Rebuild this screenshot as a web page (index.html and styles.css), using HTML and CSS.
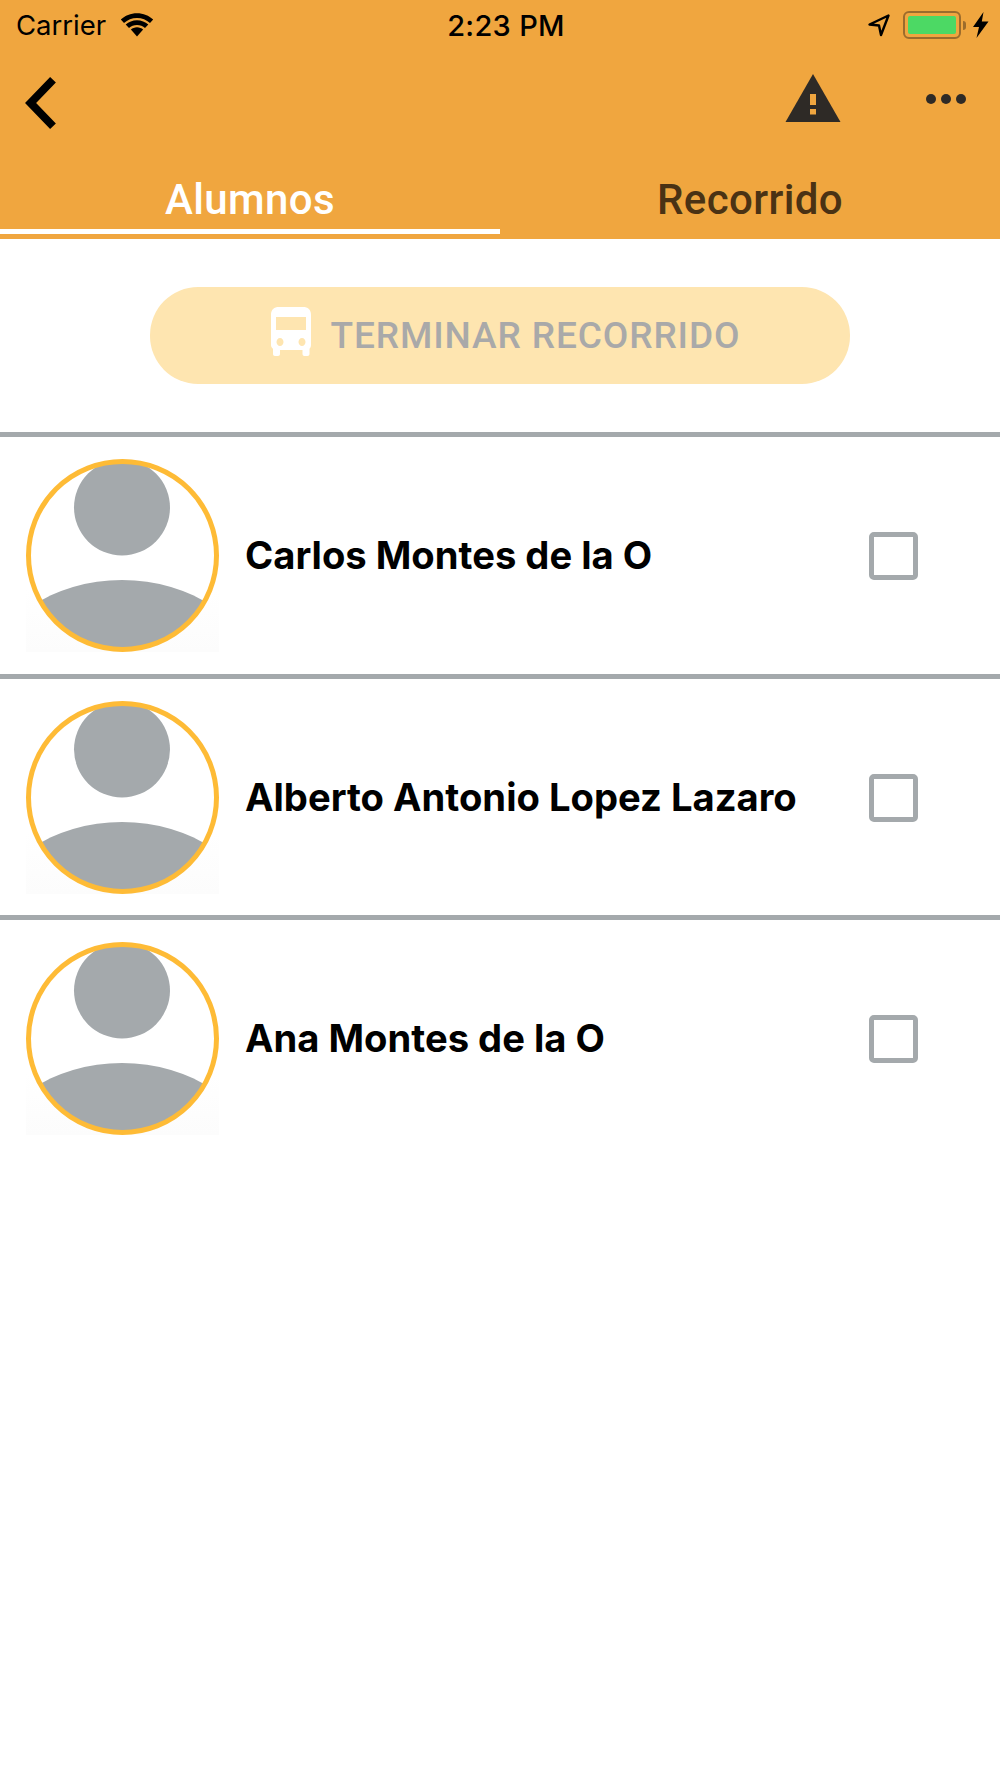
FILE: index.html
```html
<!DOCTYPE html>
<html lang="en">
<head>
  <meta charset="UTF-8">
  <title>Alumnos</title>
  <link rel="stylesheet" href="styles.css">
</head>
<body>
  <header class="app-header">
    <div class="status-bar">
      <div class="status-left">
        <span class="carrier">Carrier</span>
        <svg class="wifi-icon" viewBox="0 0 34 24"><path d="M17 5c5 0 9.500 1.900 13 5l3.200-3.400C29 2.600 23.300.2 17 .2S5 2.600.8 6.600L4 10c3.500-3.100 8-5 13-5z"/><path d="M17 12c3.100 0 5.900 1.100 8 3l3.300-3.400C25.300 8.900 21.300 7.200 17 7.200S8.700 8.900 5.700 11.600L9 15c2.100-1.900 4.900-3 8-3z"/><path d="M17 14.300c-2.400 0-4.500.9-6.100 2.300L17 23.500l6.100-6.900c-1.600-1.400-3.700-2.300-6.100-2.300z"/></svg>
      </div>
      <span class="clock">2:23 PM</span>
      <div class="status-right">
        <svg class="location-icon" viewBox="0 0 24 24"><path d="M21.500 2.500 2.500 11.500l9.500 1 2 9.500z" fill="none" stroke="#000" stroke-width="2.400" stroke-linejoin="round"/></svg>
        <div class="battery"><div class="battery-fill"></div></div>
        <div class="battery-tip"></div>
        <svg class="bolt-icon" viewBox="0 0 16 26"><path d="M10.500 0 0 15h6l-2.500 11L15.500 9.500H8.800z"/></svg>
      </div>
    </div>
    <div class="nav-bar">
      <svg class="back-icon" viewBox="0 0 34 54"><path d="M28 3.800 5.600 27 28 50.200" fill="none" stroke="#000" stroke-width="8"/></svg>
      <div class="nav-actions">
        <svg class="alert-icon" viewBox="0 0 56 48"><path d="M28 0 55.500 48H.500z" fill="#2e2a26"/><path d="M25 20h6v11h-6zM25 35h6v5.500h-6z" fill="#f0a63f"/></svg>
        <div class="more-icon"><span></span><span></span><span></span></div>
      </div>
    </div>
    <nav class="tabs">
      <div class="tab tab-active">Alumnos</div>
      <div class="tab">Recorrido</div>
    </nav>
  </header>

  <div class="finish-section">
    <div class="finish-btn">
      <svg class="bus-icon" viewBox="0 0 40 49"><path fill-rule="evenodd" d="M8 0h24c5 0 8 2.500 8 8v30c0 1.500-.5 2.800-1.500 3.800V47c0 1.200-.8 2-2 2h-3c-1.200 0-2-.8-2-2v-4H9v4c0 1.200-.8 2-2 2H4c-1.200 0-2-.8-2-2v-5.200C.6 40.800 0 39.500 0 38V8C0 2.500 3 0 8 0zM5 10v13h30V10zM9 31c-2 0-3.500 1.700-3.500 4s1.500 4 3.500 4 3.500-1.700 3.500-4-1.500-4-3.500-4zm22 0c-2 0-3.500 1.700-3.500 4s1.500 4 3.500 4 3.500-1.700 3.500-4-1.500-4-3.500-4z"/></svg>
      <span>TERMINAR RECORRIDO</span>
    </div>
  </div>

  <ul class="student-list">
    <li class="student-row">
      <svg class="avatar" viewBox="0 0 193 193"><use href="#avatar-art"/></svg>
      <span class="student-name">Carlos Montes de la O</span>
      <div class="checkbox"></div>
    </li>
    <li class="student-row">
      <svg class="avatar" viewBox="0 0 193 193"><use href="#avatar-art"/></svg>
      <span class="student-name">Alberto Antonio Lopez Lazaro</span>
      <div class="checkbox"></div>
    </li>
    <li class="student-row">
      <svg class="avatar" viewBox="0 0 193 193"><use href="#avatar-art"/></svg>
      <span class="student-name">Ana Montes de la O</span>
      <div class="checkbox"></div>
    </li>
  </ul>

  <svg class="svg-defs" width="0" height="0">
    <defs>
      <clipPath id="avatar-clip"><circle cx="96.500" cy="96.500" r="94"/></clipPath>
      <filter id="avatar-soft"><feGaussianBlur stdDeviation="0.7"/></filter>
      <linearGradient id="avatar-fade" x1="0" y1="0" x2="0" y2="1">
        <stop offset="0" stop-color="#fff"/>
        <stop offset="1" stop-color="#fcfcfc"/>
      </linearGradient>
      <g id="avatar-art">
        <rect y="130" width="193" height="63" fill="url(#avatar-fade)"/>
        <circle cx="96.500" cy="96.500" r="94" fill="#fff"/>
        <g clip-path="url(#avatar-clip)">
          <g filter="url(#avatar-soft)">
            <circle cx="96" cy="48.500" r="48" fill="#a4a9ac"/>
            <ellipse cx="96" cy="212" rx="128" ry="91" fill="#a4a9ac"/>
          </g>
        </g>
        <circle cx="96.500" cy="96.500" r="94" fill="none" stroke="#febb36" stroke-width="5"/>
      </g>
    </defs>
  </svg>
</body>
</html>
```

FILE: styles.css
```css
/* Reset some default styles */
* {
  box-sizing: border-box;
  margin: 0;
  padding: 0;
}

body {
  font-family: Inter, "Liberation Sans", sans-serif;
  background-color: #fff;
  width: 1000px;
}

/* Orange header */
.app-header {
  height: 239px;
  background-color: #f0a63f;
  display: flex;
  flex-direction: column;
}

.status-bar {
  height: 50px;
  padding: 0 11px 0 16px;
  display: flex;
  align-items: center;
  justify-content: space-between;
  color: #000;
}

.status-left,
.status-right {
  width: 300px;
  display: flex;
  align-items: center;
}

.status-right {
  justify-content: flex-end;
}

.carrier {
  font-size: 27.500px;
}

.wifi-icon {
  width: 34px;
  height: 24px;
  margin-left: 14px;
}

.clock {
  margin-left: 7px;
  font-size: 29px;
  font-weight: 500;
  letter-spacing: 0.300px;
}

.location-icon {
  width: 24px;
  height: 24px;
  margin-right: 12px;
}

.battery {
  width: 58px;
  height: 28px;
  border: 2px solid #9c6c2c;
  border-radius: 6px;
  padding: 3px;
}

.battery-fill {
  height: 100%;
  background-color: #4cd964;
  border-radius: 2px;
}

.battery-tip {
  width: 3px;
  height: 9px;
  margin: 0 7px 0 2px;
  background-color: #9c6c2c;
  border-radius: 0 3px 3px 0;
}

.bolt-icon {
  width: 16px;
  height: 26px;
}

.nav-bar {
  flex: 1;
  padding: 0 34px 20px 25px;
  display: flex;
  align-items: center;
  justify-content: space-between;
}

.back-icon {
  width: 34px;
  height: 54px;
}

.nav-actions {
  display: flex;
  align-items: center;
}

.alert-icon {
  width: 56px;
  height: 48px;
  margin: -9px 85px 0 0;
}

.more-icon {
  display: flex;
  gap: 5px;
  margin-top: -8px;
}

.more-icon span {
  width: 10px;
  height: 10px;
  border-radius: 50%;
  background-color: #2e2a26;
}

/* Tabs */
.tabs {
  display: flex;
  height: 64px;
}

.tab {
  width: 500px;
  height: 59px;
  text-align: center;
  font-family: Roboto, sans-serif;
  font-size: 42px;
  font-weight: 500;
  letter-spacing: 0.400px;
  line-height: 50px;
  color: #4a3214;
}

.tab-active {
  color: #fff;
  border-bottom: 5px solid #fff;
}

/* Finish button */
.finish-section {
  height: 193px;
  padding-top: 48px;
  display: flex;
  justify-content: center;
}

.finish-btn {
  width: 700px;
  height: 97px;
  padding-left: 11px;
  background-color: #fee5b0;
  border-radius: 48px;
  display: flex;
  align-items: center;
  justify-content: center;
  gap: 20px;
  font-family: Roboto, sans-serif;
  font-size: 37px;
  font-weight: 500;
  letter-spacing: 0.900px;
  color: #a9a9a9;
}

.bus-icon {
  width: 40px;
  height: 49px;
  margin-top: -8px;
  fill: #fff;
}

/* Student rows */
.student-list {
  list-style: none;
}

.student-row {
  height: 241.500px;
  padding: 22px 82px 0 26px;
  border-top: 5px solid #a4a9ac;
  display: flex;
  align-items: flex-start;
}

.student-list .student-row:last-child {
  height: auto;
}

.avatar {
  width: 193px;
  height: 193px;
  flex-shrink: 0;
}

.student-name {
  flex: 1;
  margin-left: 26px;
  font-size: 38.200px;
  font-weight: 700;
  line-height: 193px;
  color: #000;
}

.checkbox {
  width: 49px;
  height: 48px;
  margin-top: 73px;
  border: 5px solid #a4a9ac;
  border-radius: 5px;
}

.svg-defs {
  position: absolute;
}
```
